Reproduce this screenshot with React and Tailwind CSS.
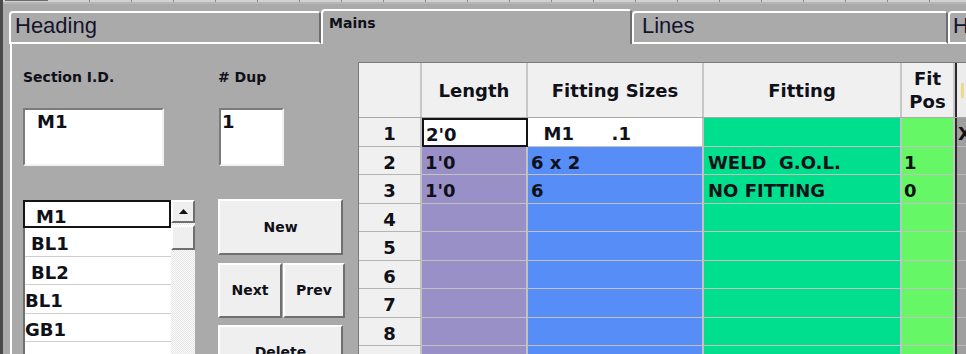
import clsx from "clsx";

const LIST = [
  { id: "M1", pad: "pl-[11px]", focus: true },
  { id: "BL1", pad: "pl-[6px]" },
  { id: "BL2", pad: "pl-[6px]" },
  { id: "BL1", pad: "pl-[0px]" },
  { id: "GB1", pad: "pl-[0px]" },
  { id: "", pad: "" },
];

const ROWS = [
  { n: 1, len: "2'0", size: "  M1      .1", fit: "", pos: "", extra: "X", first: true },
  { n: 2, len: "1'0", size: "6 x 2", fit: "WELD  G.O.L.", pos: "1" },
  { n: 3, len: "1'0", size: "6", fit: "NO FITTING", pos: "0" },
  { n: 4 },
  { n: 5 },
  { n: 6 },
  { n: 7 },
  { n: 8 },
  { n: 9 },
];

const RAISED =
  "border-2 border-t-white border-l-white border-b-[#6f6f6f] border-r-[#6f6f6f] bg-[#efefef]";
const SUNKEN =
  "border-2 border-t-[#7a7a7a] border-l-[#7a7a7a] border-b-[#f2f2f2] border-r-[#f2f2f2] bg-white";

export default function App() {
  return (
    <div className="flex h-[354px] w-[966px] flex-col overflow-hidden border-l-[3px] border-[#4a4a4a] bg-[#aaaaaa] font-['DejaVu_Sans',sans-serif] text-[#101018]">
      <TopStrip />
      <Tabs />
      <div className="ml-[7px] flex flex-1 border-l-2 border-white">
        <LeftPanel />
        <Grid />
      </div>
    </div>
  );
}

function TopStrip() {
  return (
    <div className="flex h-[4px] shrink-0 flex-col">
      <div className="flex h-[2px] bg-[#d2d2d2]">
        <div className="ml-[2px] h-[1px] w-[43px] shrink-0 bg-[#6a6a6a]" />
        {Array.from({ length: 23 }).map((_, i) => (
          <div key={i} className="h-full w-[42px] shrink-0 border-r border-[#8a8a8a]" />
        ))}
      </div>
      <div className="h-[2px] bg-[#b6b6b6]" />
    </div>
  );
}

function Tabs() {
  return (
    <div className="flex h-[40px] shrink-0 items-end pl-[6px]">
      <div className="h-[33px] w-[312px] shrink-0 rounded-t-[4px] border-2 border-l-white border-t-white border-b-white border-r-[#6e6e6e] pl-[4px] font-['Liberation_Sans',Arial,sans-serif] text-[22px] leading-[26px] text-[#14142a]">
        Heading
      </div>
      <div className="h-[35px] w-[311px] shrink-0 rounded-t-[4px] border-l-2 border-r-2 border-t-2 border-l-white border-t-white border-r-[#6e6e6e] pl-[6px] pt-[4px] text-[14px] font-bold leading-[16px]">
        Mains
      </div>
      <div className="h-[33px] w-[316px] shrink-0 rounded-t-[4px] border-2 border-l-white border-t-white border-b-white border-r-[#6e6e6e] pl-[8px] font-['Liberation_Sans',Arial,sans-serif] text-[22px] leading-[26px] text-[#14142a]">
        Lines
      </div>
      <div className="h-[33px] flex-1 rounded-tl-[4px] border-b-2 border-l-2 border-t-2 border-white pl-[3px] font-['Liberation_Sans',Arial,sans-serif] text-[22px] leading-[26px] text-[#14142a]">
        H
      </div>
    </div>
  );
}

function LeftPanel() {
  return (
    <div className="flex shrink-0 gap-[23px] pl-[11px]">
      <div className="flex w-[172px] flex-col">
        <p className="mt-[25px] h-[16px] text-[14px] font-bold leading-[16px]">Section I.D.</p>
        <div className={clsx("mt-[23px] h-[58px] w-[141px] pl-[12px] pt-[1px] text-[18px] font-bold leading-[21px]", SUNKEN)}>
          M1
        </div>
        <ListBox />
      </div>

      <div className="flex w-[127px] flex-col">
        <p className="mt-[25px] h-[16px] text-[14px] font-bold leading-[16px]"># Dup</p>
        <div className={clsx("ml-[1px] mt-[23px] h-[58px] w-[65px] pl-[1px] pt-[1px] text-[18px] font-bold leading-[21px]", SUNKEN)}>
          1
        </div>
        <Button className="mt-[33px] h-[56px] w-[125px]">New</Button>
        <div className="mt-[8px] flex gap-[1px]">
          <Button className="h-[55px] w-[64px]">Next</Button>
          <Button className="h-[55px] w-[62px]">Prev</Button>
        </div>
        <Button className="mt-[7px] h-[55px] w-[125px]">Delete</Button>
      </div>
    </div>
  );
}

function Button({ className, children }) {
  return (
    <div className={clsx("flex shrink-0 items-center justify-center text-[14px] font-bold", RAISED, className)}>
      {children}
    </div>
  );
}

function ListBox() {
  return (
    <div className="mt-[34px] flex">
      <div className="flex w-[148px] flex-col border-l-2 border-t-2 border-[#707070] bg-white">
        {LIST.map((item, i) => (
          <div
            key={i}
            className={clsx(
              "flex shrink-0 items-center whitespace-pre pt-[4px] text-[18px] font-bold leading-[21px]",
              item.pad,
              item.focus
                ? "-ml-[2px] -mt-[2px] h-[28px] border-2 border-[#141414]"
                : "h-[28.5px] border-b border-[#cfcfcf]"
            )}
          >
            {item.id}
          </div>
        ))}
      </div>
      <div className="flex w-[24px] flex-col bg-[repeating-conic-gradient(#e6e6e6_0_25%,#fbfbfb_0_50%)] bg-[length:2px_2px]">
        <div className={clsx("flex h-[23px] items-center justify-center", RAISED)}>
          <svg width="9" height="5" viewBox="0 0 9 5">
            <path d="M0 5 L4.5 0 L9 5 Z" fill="#111" />
          </svg>
        </div>
        <div className={clsx("mt-[2px] h-[25px]", RAISED)} />
      </div>
    </div>
  );
}

function Grid() {
  const hdr =
    "flex h-full shrink-0 items-center justify-center border-r-2 border-[#c8c8c8] bg-[#f0f0f0] text-[18px] font-bold";
  const cell =
    "flex h-full shrink-0 items-center whitespace-pre border-b border-r-2 border-[#c2c2c2] pt-[4px] text-[18px] font-bold leading-[21px]";

  return (
    <div className="ml-[13px] mt-[18px] flex min-w-0 flex-1 flex-col border-l border-t border-[#7a7a7a]">
      <div className="flex h-[55px] shrink-0 border-b border-[#a8a8a8]">
        <div className={clsx(hdr, "w-[63px]")} />
        <div className={clsx(hdr, "w-[106px]")}>Length</div>
        <div className={clsx(hdr, "w-[176px]")}>Fitting Sizes</div>
        <div className={clsx(hdr, "w-[198px]")}>Fitting</div>
        <div className={clsx(hdr, "w-[53px] flex-col border-r-0 text-center leading-[23px]")}>
          <span>Fit</span>
          <span>Pos</span>
        </div>
        <div className="h-full w-[2px] shrink-0 bg-[#2a2a2a]" />
        <div className="h-full flex-1 bg-[#ececec] pl-[4px] pt-[20px]">
          <div className="h-[15px] w-[3px] bg-[#efd98a]" />
        </div>
      </div>

      {ROWS.map((r) => (
        <div key={r.n} className="flex h-[28.5px] shrink-0">
          <div className={clsx(cell, "w-[63px] justify-center bg-[#f0f0f0] border-b-[#b4b4b4]")}>{r.n}</div>
          {r.first ? (
            <div className="flex h-full w-[106px] shrink-0 items-center border-2 border-[#141414] bg-white pl-[2px] pt-[4px] text-[18px] font-bold leading-[21px]">
              {r.len}
            </div>
          ) : (
            <div className={clsx(cell, "w-[106px] bg-[#9a90c8] pl-[3px]")}>{r.len}</div>
          )}
          <div className={clsx(cell, "w-[176px] pl-[3px]", r.first ? "bg-white" : "bg-[#568df6]")}>{r.size}</div>
          <div className={clsx(cell, "w-[198px] bg-[#00df8e] pl-[4px]")}>{r.fit}</div>
          <div className={clsx(cell, "w-[53px] border-r-0 bg-[#66f766] pl-[2px]")}>{r.pos}</div>
          <div className="h-full w-[2px] shrink-0 bg-[#2a2a2a]" />
          <div className="flex h-full flex-1 items-center border-b border-[#b8b8b8] bg-[#9f9f9f] pl-[1px] pt-[4px] text-[18px] font-bold leading-[21px]">
            {r.extra}
          </div>
        </div>
      ))}
    </div>
  );
}
